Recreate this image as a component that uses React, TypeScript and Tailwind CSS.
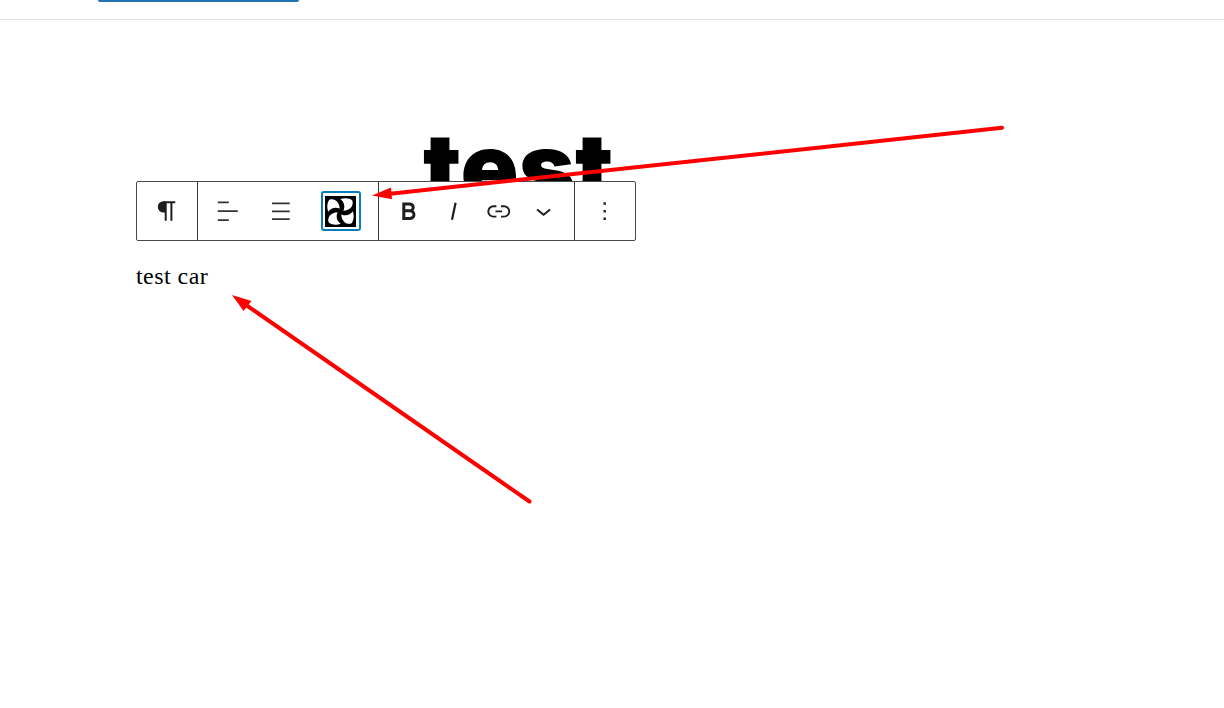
import React from "react";

function Group({ className, children }: { className: string; children?: React.ReactNode }) {
  return <div className={"flex h-full shrink-0 items-center border-[#3a3a3a] " + className}>{children}</div>;
}

function WheelIcon() {
  return (
    <svg className="block h-[31px] w-[31px] shrink-0" viewBox="0 0 30 30">
      <rect width="30" height="30" fill="#000" />
      {[0, 90, 180, 270].map((angle) => (
        <path
          key={angle}
          transform={`rotate(${angle} 15 15)`}
          d="M14.8 3.2C18.3 1.6 24.5 2 26.5 4.6C28 9.2 24.4 14 17.8 14.2C19.6 10.2 18.8 5.8 14.8 3.2Z"
          fill="#fff"
        />
      ))}
    </svg>
  );
}

function Toolbar() {
  return (
    <div className="relative flex h-[60px] w-[500px] rounded-[2px] border border-[#4a4a4a] bg-white text-[#1e1e1e]">
      <Group className="w-[61px] justify-center border-r">
        <svg className="h-[30px] w-[30px]" viewBox="0 0 30 30">
          <path d="M13.5 5.2H11.5a5.7 5.7 0 0 0 0 11.4H13.5Z" fill="#1e1e1e" />
          <path d="M11.5 6.2H23.3M13.7 6V24.8M19.4 6V24.8" stroke="#1e1e1e" strokeWidth="2" fill="none" />
        </svg>
      </Group>
      <Group className="w-[181px] border-r">
        <svg className="ml-[15px] h-[30px] w-[30px]" viewBox="0 0 30 30">
          <path d="M4.8 6.3H15.8M4.8 15.1H24.8M4.8 24.1H15.8" stroke="#333" strokeWidth="1.8" />
        </svg>
        <svg className="ml-[25px] h-[30px] w-[30px]" viewBox="0 0 30 30">
          <path d="M4 7.3H21.7M4 15.3H21.7M4 23.2H21.7" stroke="#333" strokeWidth="1.8" />
        </svg>
        <div className="ml-[22.5px] flex h-[40px] w-[40px] shrink-0 items-center justify-center rounded-[3px] border-2 border-[#0a7cba] bg-white">
          <WheelIcon />
        </div>
      </Group>
      <Group className="w-[196px] border-r">
        <svg className="ml-[15px] h-[30px] w-[30px]" viewBox="0 0 30 30">
          <path d="M9.8 8H15.2C20.5 8 20.5 14.8 15.5 14.8H9.8H15.5C21.6 14.8 21.3 22.5 15.5 22.5H9.8Z" fill="none" stroke="#1e1e1e" strokeWidth="3" />
        </svg>
        <svg className="ml-[15px] h-[30px] w-[30px]" viewBox="0 0 30 30">
          <path d="M16.6 6.7L13 23.7" stroke="#1e1e1e" strokeWidth="2.2" />
        </svg>
        <svg className="ml-[15px] h-[30px] w-[30px]" viewBox="0 0 30 30">
          <path d="M12.4 10.2H9.5a5 5 0 0 0 0 10.4H12.4M17 10.2H20a5 5 0 0 1 0 10.4H17M11.5 15.4H18" fill="none" stroke="#1e1e1e" strokeWidth="1.9" />
        </svg>
        <svg className="ml-[15px] h-[30px] w-[30px]" viewBox="0 0 30 30">
          <path d="M8.1 13.4L14.6 18.8L21.1 13.4" fill="none" stroke="#1e1e1e" strokeWidth="2" />
        </svg>
      </Group>
      <Group className="w-[60px] justify-center">
        <svg className="h-[30px] w-[30px]" viewBox="0 0 30 30">
          <path d="M13.5 6.3h2.4v2.4h-2.4zM13.5 14h2.4v2.4h-2.4zM13.5 21.6h2.4v2.4h-2.4z" fill="#1e1e1e" />
        </svg>
      </Group>
    </div>
  );
}

export default function App() {
  return (
    <main className="relative h-[708px] w-[1224px] overflow-hidden bg-white">
      <header className="h-[20px] border-b border-[#e0e0e0]">
        <div className="ml-[98px] h-[2px] w-[201px] rounded-b-[2px] bg-[#2271b1]" />
      </header>
      <div className="h-[161px] pl-[423px] pt-[91px]">
        <h1 className="font-['Inter',sans-serif] text-[96px] font-black leading-[112px] text-black">test</h1>
      </div>
      <div className="relative bg-white pl-[136px]">
        <Toolbar />
        <p className="mt-[21px] font-['Liberation_Serif',serif] text-[24px] leading-[28px] tracking-[0.45px] text-black">test car</p>
      </div>
      <svg className="pointer-events-none absolute left-0 top-0" width="1224" height="708" viewBox="0 0 1224 708">
        <g stroke="#f00" strokeWidth="4" strokeLinecap="round" fill="#f00">
          <path d="M1002 127.8L388 194" />
          <path d="M529.5 501.5L246 305" />
          <path d="M372 195.5L391 187.5L392 199.3Z" stroke="none" />
          <path d="M232 295L251.5 301L243.5 311Z" stroke="none" />
        </g>
      </svg>
    </main>
  );
}
